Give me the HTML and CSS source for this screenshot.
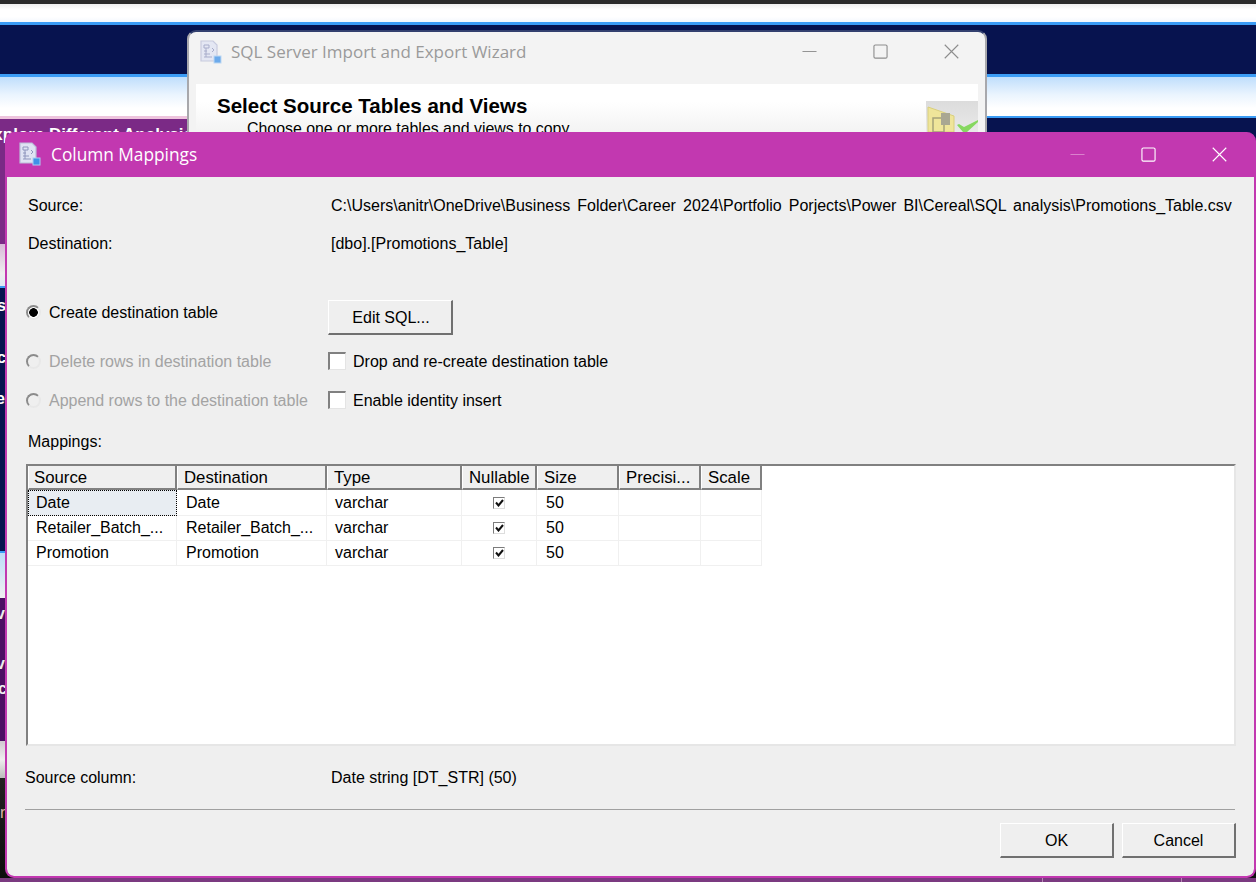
FILE: index.html
```html
<!DOCTYPE html>
<html lang="en">
<head>
<meta charset="utf-8">
<title>Column Mappings</title>
<link rel="stylesheet" href="styles.css">
</head>
<body>
<svg class="defs" width="0" height="0" aria-hidden="true">
  <defs>
    <symbol id="map-icon" viewBox="0 0 22 24">
      <path d="M1 1h12l4 4v16H1z" fill="#dfe3f3" stroke="#b9bdd8" stroke-width="1.2"/>
      <path d="M4 5h5v3H4zM4 11h3M4 14h6M4 17h8M6 8v9M12 8l2 2-2 2" fill="none" stroke="#8f96bd" stroke-width="1"/>
      <rect x="14" y="16" width="7" height="7" fill="#3f92e8" stroke="#a9cdf3"/>
    </symbol>
    <symbol id="win-min" viewBox="0 0 16 16"><path d="M.5 8h15" fill="none" stroke="currentColor" stroke-width="1"/></symbol>
    <symbol id="win-max" viewBox="0 0 16 16"><rect x="1" y="1" width="14" height="14" rx="1.5" fill="none" stroke="currentColor" stroke-width="1.2"/></symbol>
    <symbol id="win-close" viewBox="0 0 16 16"><path d="M.8.8l14.4 14.4M15.2.8L.8 15.2" fill="none" stroke="currentColor" stroke-width="1.2"/></symbol>
  </defs>
</svg>

<div class="desktop">
  <div class="band band-dark"></div>
  <div class="band band-white"></div>
  <div class="band band-navy"></div>
  <div class="band band-glow"></div>
  <div class="lower">
    <div class="side">
      <div class="side-purple"><span class="side-heading">Explore Different Analysis</span></div>
      <div class="side-light"></div>
      <div class="side-navy">
        <span class="peek peek-a">s</span>
        <span class="peek peek-b">c</span>
        <span class="peek peek-c">et</span>
      </div>
      <div class="side-light side-light-b"></div>
      <div class="side-plum">
        <span class="peek peek-d">v</span>
        <span class="peek peek-e">v</span>
        <span class="peek peek-f">c</span>
      </div>
      <div class="side-grey"></div>
      <div class="side-black"><span class="peek peek-g">r</span></div>
    </div>
    <div class="main-back">
      <div class="main-back-navy"></div>
      <div class="main-back-dark"></div>
    </div>
  </div>
  <div class="taskstrip"><i class="tick tick-a"></i><i class="tick tick-b"></i></div>
</div>

<section class="window wizard">
  <header class="wizard-bar">
    <svg class="wizard-icon"><use href="#map-icon"/></svg>
    <span class="wizard-title">SQL Server Import and Export Wizard</span>
    <div class="controls wizard-controls">
      <svg class="ctl"><use href="#win-min"/></svg>
      <svg class="ctl"><use href="#win-max"/></svg>
      <svg class="ctl"><use href="#win-close"/></svg>
    </div>
  </header>
  <div class="wizard-body">
    <div class="wizard-head">
      <div class="wizard-text">
        <h2>Select Source Tables and Views</h2>
        <p>Choose one or more tables and views to copy</p>
      </div>
      <div class="wizard-art">
        <svg width="52" height="31" viewBox="0 0 52 31">
          <path d="M2 6l26 9v16H2z" fill="#efe59a" stroke="#d9cf7c"/>
          <rect x="7" y="17" width="11" height="14" fill="none" stroke="#a7a27a" stroke-width="1.5"/>
          <rect x="15" y="12" width="9" height="12" fill="#a9a792"/>
          <path d="M31 24l6 7h4l11-10v-2l-14 7-5-3z" fill="#86d860"/>
        </svg>
      </div>
    </div>
  </div>
</section>

<section class="window dialog">
  <header class="dialog-bar">
    <svg class="dialog-icon"><use href="#map-icon"/></svg>
    <span class="dialog-title">Column Mappings</span>
    <div class="controls dialog-controls">
      <svg class="ctl ctl-faint"><use href="#win-min"/></svg>
      <svg class="ctl"><use href="#win-max"/></svg>
      <svg class="ctl"><use href="#win-close"/></svg>
    </div>
  </header>
  <div class="dialog-body">
    <dl class="info">
      <dt>Source:</dt>
      <dd class="path">C:\Users\anitr\OneDrive\Business Folder\Career 2024\Portfolio Porjects\Power BI\Cereal\SQL analysis\Promotions_Table.csv</dd>
      <dt>Destination:</dt>
      <dd>[dbo].[Promotions_Table]</dd>
    </dl>

    <div class="options">
      <label class="opt opt-first"><span class="radio radio-on"></span>Create destination table</label>
      <button class="btn btn-edit" type="button">Edit SQL...</button>
      <label class="opt opt-off"><span class="radio"></span>Delete rows in destination table</label>
      <label class="opt"><span class="check"></span>Drop and re-create destination table</label>
      <label class="opt opt-off"><span class="radio"></span>Append rows to the destination table</label>
      <label class="opt"><span class="check"></span>Enable identity insert</label>
    </div>

    <div class="mappings-label">Mappings:</div>

    <div class="grid-box">
      <table class="grid">
        <thead>
          <tr>
            <th class="c-src">Source</th>
            <th class="c-dst">Destination</th>
            <th class="c-typ">Type</th>
            <th class="c-nul">Nullable</th>
            <th class="c-siz">Size</th>
            <th class="c-pre">Precisi...</th>
            <th class="c-sca">Scale</th>
          </tr>
        </thead>
        <tbody>
          <tr>
            <td class="current">Date</td><td>Date</td><td>varchar</td>
            <td class="center"><span class="tick-box"><svg width="9" height="8" viewBox="0 0 9 8"><path d="M1 3.5l2.5 3L8 1" fill="none" stroke="#111" stroke-width="2"/></svg></span></td>
            <td>50</td><td></td><td></td>
          </tr>
          <tr>
            <td>Retailer_Batch_...</td><td>Retailer_Batch_...</td><td>varchar</td>
            <td class="center"><span class="tick-box"><svg width="9" height="8" viewBox="0 0 9 8"><path d="M1 3.5l2.5 3L8 1" fill="none" stroke="#111" stroke-width="2"/></svg></span></td>
            <td>50</td><td></td><td></td>
          </tr>
          <tr>
            <td>Promotion</td><td>Promotion</td><td>varchar</td>
            <td class="center"><span class="tick-box"><svg width="9" height="8" viewBox="0 0 9 8"><path d="M1 3.5l2.5 3L8 1" fill="none" stroke="#111" stroke-width="2"/></svg></span></td>
            <td>50</td><td></td><td></td>
          </tr>
        </tbody>
      </table>
    </div>

    <div class="source-col">
      <span class="source-col-label">Source column:</span>
      <span>Date string [DT_STR] (50)</span>
    </div>

    <hr class="sep">

    <div class="actions">
      <button class="btn btn-action" type="button">OK</button>
      <button class="btn btn-action" type="button">Cancel</button>
    </div>
  </div>
</section>
</body>
</html>
```

FILE: styles.css
```css
* { box-sizing: border-box; }
html, body { margin: 0; padding: 0; }
body {
  width: 1256px;
  height: 882px;
  overflow: hidden;
  position: relative;
  font-family: "Liberation Sans", Arial, sans-serif;
  font-size: 16px;
  color: #000;
  background: #07134f;
}
.defs { position: absolute; }

/* Desktop behind the windows */
.desktop { width: 1256px; height: 882px; display: flex; flex-direction: column; }
.band { flex: none; }
.band-dark { height: 4px; background: #2b2b2b; }
.band-white { height: 18px; background: linear-gradient(#efefef, #fff 30%, #fff 70%, #f4f8fd); }
.band-navy { height: 52px; background: #07134f; border-top: 3px solid #3b9cf5; }
.band-glow {
  height: 42px;
  border-top: 3px solid #3b9cf5;
  background: linear-gradient(#bfdefc, #eaf4fe 45%, #fff 80%);
}
.lower { flex: 1; display: flex; min-height: 0; }
.side { width: 187px; display: flex; flex-direction: column; flex: none; overflow: hidden; }
.side-purple {
  height: 128px;
  background: #7b2a86;
  border-top: 3px solid #eec4dd;
  color: #fff;
  font-weight: 700;
  font-size: 17px;
  line-height: 20px;
  white-space: nowrap;
  padding-top: 6px;
}
.side-heading { display: block; margin-left: -18px; }
.side-light { height: 44px; background: linear-gradient(#d9b9d9, #eee 70%, #dfe9f5); border-bottom: 2px solid #3b9cf5; }
.side-navy { height: 263px; background: #07134f; display: flex; flex-direction: column; color: #fff; font-weight: 700; font-size: 16px; }
.side-light-b { height: 47px; background: linear-gradient(#bcdcf8, #f0f0f0); border-top: 2px solid #3b9cf5; border-bottom: 0; }
.side-plum { height: 143px; background: #4c0f63; display: flex; flex-direction: column; color: #eee; font-weight: 700; font-size: 16px; }
.side-grey { height: 37px; background: linear-gradient(#d0c8d0, #eee 50%, #bbb); }
.side-black { flex: 1; background: linear-gradient(#222, #0d0d0d); color: #d8b8a8; font-size: 16px; }
.peek { display: block; line-height: 18px; margin-left: -3px; }
.peek-a { margin-top: 9px; }
.peek-b { margin-top: 34px; }
.peek-c { margin-top: 23px; margin-left: -4px; }
.peek-d { margin-top: 7px; margin-left: -4px; }
.peek-e { margin-top: 32px; margin-left: -4px; }
.peek-f { margin-top: 7px; margin-left: -2px; }
.peek-g { margin-top: 26px; margin-left: 0; }
.main-back { flex: 1; display: flex; flex-direction: column; }
.main-back-navy { flex: 1; background: #07134f; border-top: 2px solid #3b9cf5; }
.main-back-dark { height: 30px; background: #111; }
.taskstrip { height: 4px; flex: none; background: #7b3a80; display: flex; }
.tick { display: block; width: 1px; background: #b785b5; }
.tick-a { margin-left: 1042px; }
.tick-b { margin-left: 138px; }

/* Floating windows */
.window { position: absolute; overflow: hidden; }
.controls { margin-left: auto; display: flex; }
.ctl { width: 15px; height: 15px; display: block; }

.wizard {
  left: 187px;
  top: 30px;
  width: 800px;
  height: 110px;
  background: #f3f3f3;
  border: 2px solid #a8a8ac;
  border-top-color: #33406f;
  border-bottom: 0;
  border-radius: 9px 9px 0 0;
}
.wizard-bar { height: 40px; padding-bottom: 1px; display: flex; align-items: center; color: #9a9a9a; }
.wizard-icon { width: 22px; height: 24px; margin-left: 11px; opacity: .75; flex: none; }
.wizard-title { margin-left: 9px; font-family: "Open Sans", sans-serif; font-size: 17px; }
.wizard-controls { color: #8d8d8d; gap: 56px; padding-right: 26px; }
.wizard-body { padding: 12px 7px 0; }
.wizard-head {
  height: 60px;
  display: flex;
  background: linear-gradient(#fff 30%, #eee);
}
.wizard-text { padding: 10px 0 0 21px; flex: 1; }
.wizard-text h2 { margin: 0; font-size: 20.5px; line-height: 23px; font-weight: 700; }
.wizard-text p { margin: 3px 0 0 30px; line-height: 18px; font-size: 15.9px; }
.wizard-art { width: 52px; margin-top: 17px; background: linear-gradient(#dcdcdc, #eee); }
.wizard-art svg { display: block; }

.dialog {
  left: 5px;
  top: 132px;
  width: 1251px;
  height: 746px;
  display: flex;
  flex-direction: column;
  background: #c238b0;
  border: 2px solid #c238b0;
  border-top: 0;
  border-radius: 9px;
}
.dialog-bar { height: 45px; padding-bottom: 1px; flex: none; display: flex; align-items: center; color: #fff; }
.dialog-icon { width: 22px; height: 24px; margin-left: 12px; flex: none; }
.dialog-title { margin-left: 10px; font-family: "Open Sans", sans-serif; font-size: 17.3px; }
.dialog-controls { gap: 56px; padding-right: 27px; }
.ctl-faint { color: #dc86cf; }
.dialog-body {
  flex: 1;
  background: #efefef;
  padding: 20px 19px 0 18px;
  border-radius: 0 0 7px 7px;
  display: flex;
  flex-direction: column;
}

.info {
  margin: 0;
  display: grid;
  grid-template-columns: 306px 1fr;
  grid-auto-rows: 18px;
  row-gap: 20px;
  line-height: 18px;
  white-space: nowrap;
}
.info dt { padding-left: 3px; }
.info dd { margin: 0; }
.path { word-spacing: 2.6px; }

.options {
  margin-top: 47px;
  display: grid;
  grid-template-columns: 303px auto;
  grid-template-rows: 35px 24px 24px;
  row-gap: 15px;
  justify-content: start;
  align-items: start;
}
.opt { height: 24px; display: flex; align-items: center; white-space: nowrap; }
.opt-first { margin-top: 1px; }
.opt-off { color: #a3a3a3; }
.radio {
  width: 15px;
  height: 15px;
  margin: 0 8px 2px 1px;
  flex: none;
  border-radius: 50%;
  background: #fff;
  border: 2px solid #8b8b8b;
  border-right-color: #e8e8e8;
  border-bottom-color: #e8e8e8;
}
.opt-off .radio { background: #efefef; }
.radio-on { background: radial-gradient(circle, #000 0 4px, #fff 4.6px); }
.check {
  width: 18px;
  height: 18px;
  margin: 0 7px 2px 0;
  flex: none;
  background: #fff;
  border: 2px solid #808080;
  border-right: 1px solid #e4e4e4;
  border-bottom: 1px solid #e4e4e4;
}

.btn {
  font: inherit;
  color: #000;
  padding: 2px 0 0;
  background: #efefef;
  border: 2px solid #fff;
  border-right-color: #707070;
  border-bottom-color: #707070;
  border-top-width: 1px;
  border-left-width: 1px;
}
.btn-edit { width: 125px; height: 35px; padding-left: 2px; }
.btn-action { width: 114px; height: 35px; }

.mappings-label { margin: 20px 0 0 3px; line-height: 18px; }

.grid-box {
  margin: 13px 0 0 1px;
  width: 1210px;
  height: 282px;
  flex: none;
  background: #fff;
  border: 2px solid #808080;
  border-right: 2px solid #e6e6e6;
  border-bottom: 2px solid #e6e6e6;
  overflow: hidden;
}
.grid { border-collapse: separate; border-spacing: 0; table-layout: fixed; width: 734px; }
.c-src { width: 149px; }
.c-dst { width: 150px; }
.c-typ { width: 135px; }
.c-nul { width: 75px; }
.c-siz { width: 82px; }
.c-pre { width: 82px; }
.c-sca { width: 61px; }
.grid th {
  height: 24px;
  padding: 1px 0 0 6px;
  font-weight: 400;
  font-size: 16.8px;
  text-align: left;
  background: #efefef;
  border-right: 2px solid #808080;
  border-bottom: 2px solid #808080;
  border-left: 1px solid #fff;
  white-space: nowrap;
  overflow: hidden;
}
.grid th.c-src { padding-left: 5px; }
.grid td {
  height: 25px;
  padding: 0 0 0 8px;
  border-right: 1px solid #f0f0f0;
  border-bottom: 1px solid #f0f0f0;
  white-space: nowrap;
  overflow: hidden;
}
.grid tbody tr:first-child td { height: 26px; }
.grid td:nth-child(2), .grid td:nth-child(5) { padding-left: 9px; }
.grid td.current {
  background: #e8edf2;
  outline: 1px dotted #000;
  outline-offset: -1px;
}
.grid td.center { padding: 0 0 1px; text-align: center; }
.tick-box {
  display: inline-flex;
  align-items: center;
  justify-content: center;
  width: 12px;
  height: 12px;
  vertical-align: middle;
  background: #fff;
  border: 1px solid #7c7c7c;
  border-right-color: #ddd;
  border-bottom-color: #ddd;
}

.source-col { margin-top: 23px; display: flex; line-height: 18px; white-space: nowrap; }
.source-col-label { width: 306px; }

.sep { margin: 22px 0 0; width: 1210px; height: 1px; border: 0; background: #a0a0a0; }

.actions { margin-top: 13px; width: 1211px; display: flex; justify-content: flex-end; gap: 8px; }
```
